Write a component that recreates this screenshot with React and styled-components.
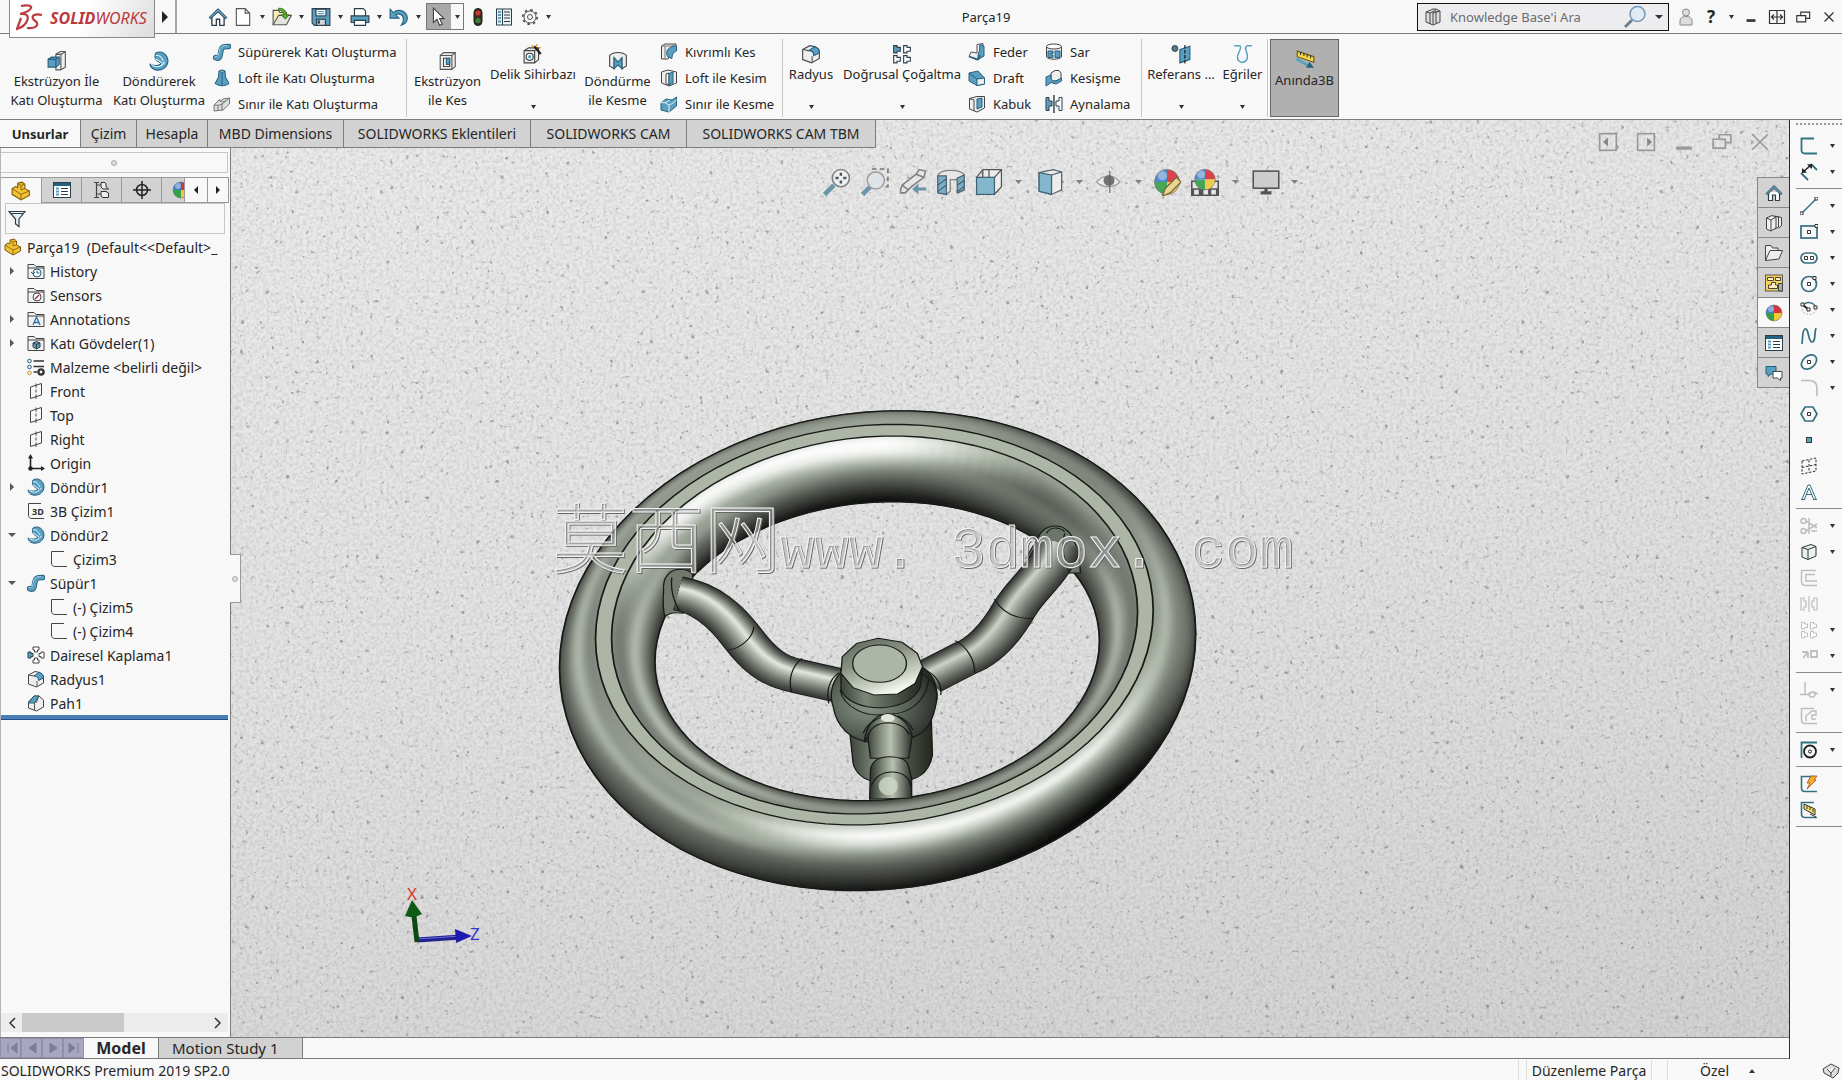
import styled, { createGlobalStyle, css } from 'styled-components';

const colors = {
    panel: '#f8f8f8',
    tab: '#d2d2d2',
    line: '#7c7c7c',
    softLine: '#c6c6c6',
    text: '#262626',
    ink: '#2d3e48',
    blue: '#5a9fc0',
    paleBlue: '#a9d0e2',
    deepBlue: '#24607f',
    sketch: '#34707e',
    disabled: '#bdbdbd',
};

const GlobalStyle = createGlobalStyle`
    * {
        box-sizing: border-box;
    }

    html, body, #root {
        height: 100%;
        margin: 0;
    }

    body {
        overflow: hidden;
        background: ${colors.panel};
        color: ${colors.text};
        font-family: 'Noto Sans', 'Open Sans', sans-serif;
        font-size: 14px;
    }

    button, input {
        font: inherit;
        color: inherit;
    }

    svg {
        display: block;
        flex: none;
    }
`;

/* ---------- icons ---------- */

const I = colors.ink;
const B = colors.blue;
const P = colors.paleBlue;
const D = colors.deepBlue;
const S = colors.sketch;
const G = colors.disabled;

const ball = (
    <>
        <path d="M9 9 L9 1 A8 8 0 0 1 17 9 Z" fill="#d8323a" />
        <path d="M9 9 L17 9 A8 8 0 0 1 9 17 Z" fill="#f0c93a" />
        <path d="M9 9 L9 17 A8 8 0 0 1 1 9 Z" fill="#35a049" />
        <path d="M9 9 L1 9 A8 8 0 0 1 9 1 Z" fill="#3f7fc8" />
        <circle cx="6" cy="5" r="3" fill="#fff" opacity=".4" />
        <circle cx="9" cy="9" r="8" stroke="#666" strokeWidth=".5" />
    </>
);

const folder = <path d="M1 16.500V2.500H7L9 4.500H17V16.500Z M1 6H17" fill="#f1f1f1" stroke="#444" />;
const swirl = (
    <>
        <path d="M6 2 C11 -1 17 3 17 9 C17 15 11 18 6 17 C3 16.500 1 14 1 12 C5 14 10 13 11 11 C7 9 4 7 6 2 Z" fill={B} stroke={D} />
        <path d="M6 4 C9 3 11 5 13 9 M2 12 C7 16 12 14 14 10 M6 7 L12 11" stroke="#e4f3f8" />
    </>
);
const sweep = (
    <>
        <path d="M2.500 14.500 C8 17 7 11 8 7.500 C9 3.500 11 3.500 15.500 3.500" stroke={D} strokeWidth="5.500" strokeLinecap="round" />
        <path d="M2.500 14.500 C8 17 7 11 8 7.500 C9 3.500 11 3.500 15.500 3.500" stroke={B} strokeWidth="3.700" strokeLinecap="round" />
        <path d="M2 13.500 C6 14.500 5.500 10 6.500 7 C7.500 4 9 2.500 14 2.500" stroke={P} />
    </>
);
const filletCube = (
    <>
        <path d="M1.500 5 L8 1.500 L13 2.500 L16.500 6 V13 L9.500 17 L1.500 14 Z" fill="#eee" stroke="#444" />
        <path d="M7 6 L12 2.500 C15 3 16.500 5 16.500 8 L11.500 10.500 C11.500 8 10 6 7 6Z" fill={B} stroke={D} />
        <path d="M1.500 5 L7 6 M10 11 V16.500" stroke="#555" />
    </>
);
const part = (
    <>
        <path d="M1 7 L4 5 L6 6 V2 L10 1 L12.500 3 V7 L16.500 9 V13 L9 17 L1 12 Z" fill="#f2c230" stroke="#7a5a10" />
        <path d="M1 7 L9 12 V17 M9 12 L16.500 9 M6 2.500 L9 4 V8 L12 7 M9 4 L12 3" stroke="#8a6a18" strokeWidth=".9" />
    </>
);
const listBox = (
    <>
        <rect x=".5" y="1.500" width="17" height="15" fill="#fff" stroke={I} />
        <path d="M1 3.500H17" stroke={D} strokeWidth="3" />
        <path d="M3 7.500H6M3 10.500H6M3 13.500H6" stroke={B} strokeWidth="2" />
        <path d="M8 7.500H15M8 10.500H15M8 13.500H15" stroke={I} />
    </>
);
const tee = (t, fill, stroke = I) => (
    <path transform={t} d="M.5 .5H3.500V2H6.500V5.500H3.500V7H.5Z" fill={fill} stroke={stroke} />
);
const plane = <path d="M3.500 5 L14.500 1.500 V13 L3.500 16.500 Z M9 1.500 V5.500 M9 7.500V10.500M9 12.500V17" stroke="#444" fill="none" />;
const sketch = <path d="M14 1.500H1.500V13C1.500 15.500 3 16.500 5 16.500H17" stroke="#444" fill="none" />;
const house = (
    <>
        <path d="M3.500 8V16.500H7.500V11H10.500V16.500H14.500V8" fill="#fff" stroke={I} strokeWidth="1.200" />
        <path d="M1 9.500 L9 1.500 L17 9.500 L15.500 10.500 L9 4.500 L2.500 10.500 Z" fill={B} stroke={I} strokeWidth=".9" />
    </>
);
const box = (fill) => (
    <>
        <path d="M2 4.500 L11 1.500 L16 3.500 V13 L8 16.500 L2 14 Z" fill={fill} stroke="#333" />
        <path d="M2 4.500 L8 6.500 L16 3.500 M8 6.500V16.500" stroke="#333" />
    </>
);

const icons = {
    home: house,
    blank: <path d="M3 1.500H11L15 5.500V16.500H3Z M11 1.500V5.500H15" fill="#fff" stroke="#555" />,
    open: (
        <>
            <path d="M1 16V3H6L7 5H13V8" fill="#f3efb4" stroke="#555" />
            <path d="M1 16 L6 7.500 H17.500 L13 16Z" fill="#e4e4dc" stroke="#555" />
            <path d="M6 1 C11 1 13 4 13 7 H15.500L12 11L8 7H10.500C10 4 8 3 6 3Z" fill="#59a52c" stroke="#2c6515" strokeWidth=".6" />
        </>
    ),
    save: (
        <>
            <path d="M1 1.500H17V16.500H3L1 14.500Z" fill={B} stroke={I} />
            <rect x="4.500" y="2" width="9" height="6" fill="#fff" stroke={I} />
            <path d="M6 4H12M6 6H12" stroke={B} />
            <rect x="5" y="11" width="8" height="5.500" fill="#cfd8dd" stroke={I} />
            <path d="M7 12V15" stroke={I} strokeWidth="2" />
        </>
    ),
    print: (
        <>
            <path d="M4 8V1.500H12L14 3.500V8" fill="#fff" stroke={I} />
            <path d="M1 8H17V14H1Z" fill={B} stroke={I} />
            <path d="M4 12H14V16.500H4Z" fill="#fff" stroke={I} />
        </>
    ),
    undo: <path d="M1 2V10H9L6 7C9 5 13 7 13 11C13 13 12.500 14.500 11 16.500C16 15 17.500 11 16 7.500C14 3 8 1.500 4 5Z" fill={B} stroke={D} />,
    cursor: <path d="M4 1V14L7.200 11L9.500 16.500L12 15.500L9.500 10.500H13.500Z" fill="#fff" stroke="#444" />,
    traffic: (
        <>
            <rect x="5" y=".5" width="8" height="17" rx="4" fill="#3f2a22" stroke="#1c1c1c" />
            <circle cx="9" cy="5" r="2.600" fill="#c23a31" />
            <circle cx="9" cy="12.500" r="2.600" fill="#37843a" />
        </>
    ),
    options: (
        <>
            <rect x="1.500" y="1" width="15" height="16" fill="#e9f1f4" stroke={I} />
            <path d="M7.500 1V17" stroke={I} />
            <path d="M3 4H6M3 7H6M3 10H6M3 13.500H6" stroke={B} strokeWidth="2" />
            <path d="M9 4H15M9 7H15M9 10H15M9 13.500H15" stroke={I} />
        </>
    ),
    gear: (
        <>
            <circle cx="9" cy="9" r="6" stroke="#555" />
            <circle cx="9" cy="9" r="7.200" stroke="#555" strokeWidth="1.800" strokeDasharray="2.600 3.050" />
            <circle cx="9" cy="9" r="2.500" stroke="#555" />
        </>
    ),
    extrude: (
        <>
            <path d="M8 3 L12 .5 H16.500V14.500L12 17 H8Z" fill="#eee" stroke="#555" />
            <path d="M12.500 3V17M8 3H12.500L16 1" stroke="#555" />
            <path d="M1 7.500 L4 5.500H11V12L8 14.500H1Z" fill={B} stroke={D} />
            <path d="M1 7.500H8V14.500M8 7.500L11 5.500" stroke={D} />
        </>
    ),
    revolve: swirl,
    sweep,
    loft: <path d="M6 2C8 .8 10 .8 12 2L12.500 8L16 14.500C12 17.500 6 17.500 2 14.500L5.500 8ZM6 2C8 3.500 10 3.500 12 2M9 4V16" fill={B} stroke={D} />,
    boundary: (
        <>
            <path d="M1 10 L6 5 Q9 6 10 4 L16.500 3V9L10 15L1 16Z" fill="#ddd" stroke="#777" />
            <path d="M1 10Q6 11 9 9L16.500 3M9 9V15.500M5 10.500V16M6 5Q8 8 13 6" stroke="#777" />
        </>
    ),
    cut: (
        <>
            <path d="M2 4L5 1.500H15.500V14L12.500 16.500H2Z" fill="#eee" stroke="#555" />
            <path d="M2 4H12.500V16.500M12.500 4L15.500 1.500" stroke="#555" />
            <path d="M5 6.500H10.500V14H5Z" fill="#fff" stroke="#444" />
            <path d="M7.500 6.500H10.500V12H7.500Z" fill={B} stroke={D} />
        </>
    ),
    wizard: (
        <>
            <path d="M1 6L5 3.500H14V14L10.500 17H1Z" fill="#eee" stroke="#444" />
            <path d="M1 6H10.500V17M10.500 6L14 3.500" stroke="#444" />
            <circle cx="6" cy="11.500" r="3.200" fill="#fff" stroke={I} />
            <circle cx="6" cy="11.500" r="1.500" fill={B} />
            <path d="M10 2L16 9" stroke="#222" strokeWidth="2" />
            <path d="M8 1L9 3M13 0L12 2M16 3L14 4" stroke="#e39b28" strokeWidth="1.300" />
        </>
    ),
    revCut: (
        <>
            <path d="M1.500 4C5 .5 13 .5 16.500 4V13.500L12.500 16V7L9 13L5.500 7V16L1.500 13.500Z" fill="#eee" stroke="#444" />
            <path d="M5.500 6L9 10L12.500 6V16L9 12.500L5.500 16Z" fill={B} stroke={D} />
        </>
    ),
    sweptCut: (
        <>
            <path d="M1.500 3L5 1H16V5L8 16H1.500Z" fill="#eee" stroke="#444" />
            <path d="M1.500 3H12L16 1M5 3V16" stroke="#777" />
            <path d="M7 8C8 5 12 3 16.500 3V8C13 9 12 12 12 15.500L8 14C6.500 12 6.500 10 7 8Z" fill={B} stroke={D} />
        </>
    ),
    loftCut: (
        <>
            <path d="M1.500 3L8 1L16.500 3V14L9 17L1.500 14Z" fill="#eee" stroke="#444" />
            <path d="M6 5L9 4V16L6 14.500Z" fill="#fff" stroke="#444" />
            <path d="M9 4.500L13 3V14L9 16Z" fill={B} stroke={D} />
        </>
    ),
    boundaryCut: (
        <>
            <path d="M1 8 L6 4 L12 5L16.500 2V11L9 17L1 15Z" fill={B} stroke={D} />
            <path d="M1 8 Q5 6 7 9T16.500 5M9 10V17M5 8L10 5" stroke="#e2f1f6" />
        </>
    ),
    fillet: filletCube,
    pattern: (
        <>
            {tee('translate(1 1)', B)}
            {tee('translate(10 1)', '#fff')}
            {tee('translate(1 10)', '#fff')}
            {tee('translate(10 10)', '#fff')}
        </>
    ),
    rib: (
        <>
            <path d="M9 1.500L15 .5V13L9 17L1 13.500L3 9L9 10Z" fill="#eee" stroke="#555" />
            <path d="M12 1.500L16 3V13L10 16.500V12Q12 8 12 1.500Z" fill={B} stroke={D} />
            <path d="M1 13.500L10 16.500L12 12" stroke={D} strokeWidth="1.500" />
        </>
    ),
    draft: (
        <>
            <path d="M1 4L10 2L16.500 9V15L9 16.500L1 12Z" fill={B} stroke={D} />
            <path d="M9 10L16.500 9V15L9 16.500Z" fill="#eee" stroke={D} />
            <path d="M1 4L9 10" stroke={D} />
        </>
    ),
    shell: (
        <>
            <path d="M1.500 3.500L9 1.500H16.500V13L9 17L1.500 14Z" fill="#eee" stroke="#444" />
            <path d="M9 4L14 3V12L9 14Z" fill={B} stroke={D} />
            <path d="M1.500 3.500L6 5V16" stroke="#444" />
        </>
    ),
    wrap: (
        <>
            <path d="M1.500 3.500V14C4 17 14 17 16.500 14V3.500" fill="#eee" stroke="#444" />
            <ellipse cx="9" cy="3.500" rx="7.500" ry="2.500" fill="#fff" stroke="#444" />
            <path d="M3 8H8V10.500H6V12H8V14.500H3ZM10 8H15V14.500H10Z" fill={B} stroke={D} />
        </>
    ),
    intersect: (
        <>
            <path d="M6 4L10 1.500H14L16 4V10L11 12H6Z" fill="#eee" stroke="#444" />
            <path d="M1 8L6 6V10Q8 13 11 12L16.500 9V12L11 15L6 13.500L1 17Z" fill={B} stroke={D} />
        </>
    ),
    mirror: (
        <>
            <path d="M1 2.500H4V6H7V11H4V15.500H1Z" fill={B} stroke={I} />
            <path d="M17 2.500H14V6H11V11H14V15.500H17Z" fill="#fff" stroke={I} />
            <path d="M9 0V18" stroke={I} strokeWidth="1.400" />
        </>
    ),
    reference: (
        <>
            <circle cx="3.500" cy="4" r="2.700" fill="#557a83" stroke={I} strokeWidth=".8" />
            <path d="M8 5L17 2V14L8 17Z" fill={B} stroke={D} />
            <path d="M12.500 1V18" stroke="#111" strokeDasharray="3 1.500" />
        </>
    ),
    curves: <path d="M1 1.500H6C9 3 4 8 4 12C4 18 13 18 13 11C13 7 9 3 13 1.500H17" stroke={B} strokeWidth="1.300" />,
    instant: (
        <>
            <path d="M2 1L17 6V11L2 6Z" fill="#f6d748" stroke="#6a5a12" />
            <path d="M5 2V4.500M8 3V5.500M11 4V6.500M14 5V7.500" stroke="#333" />
            <path d="M1 8L12 14" stroke={B} strokeWidth="2.500" />
            <path d="M10 16H17L13 10.500Z" fill={D} />
        </>
    ),
    help: <path d="M2 4L9 1H12L16 3V14L9 17L2 14ZM2 4L6 5V16M6 5L12 2M9 4V16.500M9 5L16 3M12 3V15" fill="#ddd" stroke="#444" />,
    user: (
        <>
            <circle cx="9" cy="4.500" r="3.500" fill="#ddd" stroke="#888" />
            <path d="M3 17V13C3 10 5 8.500 9 8.500S15 10 15 13V17Z" fill="#ddd" stroke="#888" />
        </>
    ),
    min: <path d="M4 13H14" stroke="#333" strokeWidth="3" />,
    expand: <path d="M1.500 2.500H16.500V15.500H1.500ZM9 3V15M3.500 9H14.500M6 6.500L3.500 9L6 11.500M12 6.500L14.500 9L12 11.500" stroke="#333" strokeWidth="1.200" />,
    restore: <path d="M6.500 7V3.500H16.500V10.500H12M2 7.500H12V14.500H2Z" stroke="#333" strokeWidth="1.300" />,
    close: <path d="M4 4L14 14M14 4L4 14" stroke="#333" strokeWidth="1.400" />,
    dockLeft: (
        <>
            <rect x="1.500" y="1.500" width="15" height="15" stroke="#999" strokeWidth="1.500" />
            <path d="M9 5V13L4.500 9Z" fill="#888" />
        </>
    ),
    dockRight: (
        <>
            <rect x="1.500" y="1.500" width="15" height="15" stroke="#999" strokeWidth="1.500" />
            <path d="M10 5V13L14.500 9Z" fill="#888" />
        </>
    ),
    viewMin: <path d="M2 14.500H16" stroke="#999" strokeWidth="3" />,
    viewRestore: <path d="M6.500 6V2.500H17V9.500H12M1 6.500H12V14.500H1Z" stroke="#999" strokeWidth="1.500" />,
    viewClose: <path d="M2 2L16 16M16 2L2 16" stroke="#999" strokeWidth="1.500" />,
    part,
    list: listBox,
    config: (
        <>
            <path d="M3.500 1V17M3.500 4H8M3.500 13H8" stroke="#444" strokeWidth="1.200" />
            <path d="M1 1.500H6M1 16.500H6" stroke="#444" />
            <path d="M8 1.500H12L13 3V6L15.500 8H10L8 6ZM8 10.500H13L15.500 12V16.500H10L8 15Z" fill="#eee" stroke="#333" />
        </>
    ),
    target: (
        <>
            <circle cx="9" cy="9" r="5.500" stroke="#222" strokeWidth="1.500" />
            <path d="M9 0V18M0 9H18" stroke="#222" strokeWidth="1.500" />
        </>
    ),
    ball,
    filter: <path d="M1 1.500H17L11 9V16.500L7.500 14V9Z M3 3.500H15" fill="#e5f0f4" stroke={I} strokeWidth="1.200" />,
    history: <>{folder}<circle cx="10" cy="11" r="4" fill="#fff" stroke={D} /><path d="M10 8.500V11H12.500M4 10L6 12L8 10" stroke={D} /></>,
    sensors: <>{folder}<circle cx="10" cy="11" r="4" fill="#fff" stroke="#444" /><path d="M8 13L12 9" stroke="#a33" strokeWidth="1.400" /></>,
    annotations: <>{folder}<path d="M6 15L9.500 7L13 15M7.500 12.500H11.500" stroke="#2f6fae" strokeWidth="1.300" /></>,
    bodies: <>{folder}<path d="M6 9L9.500 7.500L13 9V13L9.500 15L6 13Z" fill={B} stroke={I} /><path d="M6 9L9.500 10.500L13 9M9.500 10.500V15" stroke={I} /></>,
    material: (
        <>
            <circle cx="2.500" cy="3" r="1.800" stroke={D} />
            <circle cx="2.500" cy="9" r="1.800" stroke={D} />
            <circle cx="2.500" cy="15" r="1.800" stroke="#c98a2a" />
            <path d="M6.500 3H17M6.500 8.500H17M6.500 14H10" stroke="#333" strokeWidth="1.700" />
            <circle cx="14" cy="14" r="2.600" stroke="#333" strokeWidth="2.400" />
        </>
    ),
    plane,
    origin: (
        <>
            <path d="M3.500 3V14.500H15" stroke="#222" strokeWidth="1.600" />
            <path d="M3.500 0L1 4.500H6ZM18 14.500L14 12V17Z" fill="#222" />
            <circle cx="3.500" cy="14.500" r="2.200" fill="#222" />
        </>
    ),
    sketch,
    circular: (
        <>
            <path d="M6 1H12V4H10.500V6H7.500V4H6Z M6 17H12V14H10.500V12H7.500V14H6ZM17 6V12H14V10.500H12V7.500H14V6Z" fill="#fff" stroke="#444" />
            <path d="M1 6V12H4V10.500H6V7.500H4V6Z" fill={B} stroke={I} />
        </>
    ),
    chamfer: (
        <>
            <path d="M1.500 8L7 2H12L16.500 6V13L9.500 17L1.500 14Z" fill="#eee" stroke="#444" />
            <path d="M1.500 9L7 2H12L7.500 9Z" fill={B} stroke={D} />
            <path d="M7.500 9V16M12 2L9 9" stroke="#555" />
        </>
    ),
    books: <path d="M1.500 4L7 1.500L11 3V14L6 17L1.500 15ZM1.500 4L6 6V17M6 6L11 3M9 2L13.500 3V13L10 15M12 2.500L16.500 3.500V12L13.500 14" fill="#eee" stroke="#444" />,
    folderOpen: <path d="M.5 16.500V1.500H6L7.500 4H13V6.500M.5 16.500L5 6.500H17.500L14 15Z" fill="#eee" stroke="#444" />,
    palette: (
        <>
            <rect x=".5" y="1" width="17" height="16" fill="#f6d25a" stroke="#555" />
            <path d="M2.500 3.500H8.500V6.500H2.500ZM10.500 3.500H15.500V6.500H10.500ZM6.500 8.500H10.500V11H12.500V14.500H3.500V11H6.500Z" fill="#fff0b8" stroke="#444" />
            <path d="M13.500 9.500H17.500V17H13.500Z" fill="#aaa" stroke="#444" />
        </>
    ),
    chat: (
        <>
            <path d="M1 2.500H11V10H6L3 12.500V10H1Z" fill={B} stroke={D} />
            <path d="M8 7.500H17V14H15.500V16.500L12.500 14H8Z" fill="#fff" stroke="#444" />
        </>
    ),
    zoomFit: (
        <>
            <path d="M1 17L7 11" stroke="#5f8ea4" strokeWidth="3" />
            <circle cx="11.500" cy="6.500" r="5.500" fill="#eef2f4" stroke="#777" />
            <path d="M11.500 3V5M11.500 8V10M8 6.500H10M13 6.500H15" stroke="#444" strokeWidth="1.600" />
        </>
    ),
    zoomArea: (
        <>
            <path d="M7 .7H17.300V12H14" stroke="#666" strokeDasharray="3 2" />
            <path d="M1 17L6 12" stroke="#5f8ea4" strokeWidth="3" />
            <circle cx="9.500" cy="8" r="5.500" fill="#dfe4ea" stroke="#999" />
        </>
    ),
    prevView: (
        <>
            <path d="M1 14L2 11L11 4L13 1L17 2L16 6L8 12L4 16L1 16Z" fill="#e6e6e6" stroke="#777" />
            <path d="M11 4L16 6M2 11L6 14" stroke="#777" />
            <path d="M8.500 13.500L12.500 10V12.500H17.500V14.500H12.500V17Z" fill="#5f8ea4" />
        </>
    ),
    section: (
        <>
            <path d="M.5 4.500C3 .5 15 .5 17.500 4.500V14L13.500 16V7.500H8.500V15L6 17L.5 15Z" fill="#e8e8e8" stroke="#777" strokeWidth=".8" />
            <path d="M.5 5H6V17L.5 16ZM13 6.500L17.500 4.500V14L13 16Z" fill="#6fa9c3" stroke="#456" strokeWidth=".8" />
            <path d="M.5 11L6 7M.5 15L6 11M13 11L17.500 8M13 15L17.500 12" stroke="#345" strokeWidth=".7" />
        </>
    ),
    orient: (
        <>
            <path d="M5 1H17V12L12.500 17M1 6L5 1M12.500 6L17 1M5 1V6M9 1V6" stroke="#444" fill="#eee" strokeWidth=".8" />
            <rect x="1" y="6" width="11.500" height="11" fill="#7ab3cc" stroke="#356" strokeWidth=".8" />
        </>
    ),
    display: (
        <>
            <path d="M2 3L11 1L16.500 2.500V14L10 17L2 15Z" fill="#eee" stroke="#456" strokeWidth=".8" />
            <path d="M2 3L10 4.500V17L2 15Z" fill="#7ab3cc" stroke="#356" strokeWidth=".8" />
            <path d="M10 4.500L16.500 2.500" stroke="#456" strokeWidth=".8" />
        </>
    ),
    eye: (
        <>
            <path d="M1 9C5 4 12 4 16 9C12 13 5 13 1 9Z" fill="#eee" stroke="#999" strokeWidth=".8" />
            <circle cx="9" cy="8" r="3.500" fill="#666" />
            <path d="M9.500 2V16" stroke="#555" strokeWidth=".7" />
        </>
    ),
    appearance: (
        <>
            {ball}
            <path d="M6 18L8 13L15 6L18 9L11 16Z" fill="#ecd58a" stroke="#6b5a2a" strokeWidth=".8" />
        </>
    ),
    scene: (
        <>
            <path d="M0 8H18V18H0Z" fill="#444" />
            <path d="M1 9H17V13H1ZM2 14H5V17H2ZM8 14H11V17H8ZM13 14H16V17H13Z" fill="#e8e8e8" />
            <g transform="translate(1.500 0) scale(.83)">{ball}</g>
        </>
    ),
    monitor: (
        <>
            <rect x=".8" y="2" width="16.400" height="11" fill="#ccc" stroke="#444" />
            <path d="M9 13V16M5.500 16H12.500" stroke="#444" strokeWidth="2" />
        </>
    ),
    skSketch: <path d="M14 1.500H1.500V13C1.500 15.500 3 16.500 5 16.500H17" stroke={S} strokeWidth="1.800" />,
    skDim: (
        <>
            <path d="M1 10L8 17M11 1L17 7" stroke={S} strokeWidth="1.800" />
            <path d="M3 9L11 2" stroke="#222" strokeWidth="1.600" />
            <path d="M2 10V5L7 9.500ZM12 1V6L7 1.500Z" fill="#222" />
        </>
    ),
    skLine: (
        <>
            <path d="M1 17L17 1" stroke={S} strokeWidth="1.500" />
            <path d="M0 15H3V18H0ZM15 0H18V3H15Z" fill="#fff" stroke="#333" />
        </>
    ),
    skRect: (
        <>
            <rect x="1" y="3" width="16" height="12" stroke={S} strokeWidth="1.700" />
            <path d="M7.500 7.500H10.500V10.500H7.500ZM15 1.500H18V4.500H15Z" fill="#fff" stroke="#333" />
        </>
    ),
    skSlot: (
        <>
            <rect x="1" y="4" width="16" height="10" rx="5" stroke={S} strokeWidth="1.700" />
            <path d="M4.500 7.500H7.500V10.500H4.500ZM10.500 7.500H13.500V10.500H10.500Z" fill="#fff" stroke="#333" />
        </>
    ),
    skCircle: (
        <>
            <circle cx="9" cy="9" r="7.500" stroke={S} strokeWidth="1.700" />
            <path d="M7.500 7.500H10.500V10.500H7.500ZM13 1.500H16V4.500H13Z" fill="#fff" stroke="#333" />
        </>
    ),
    skArc: (
        <>
            <path d="M3 4C7 0 13 1 16 6" stroke={S} strokeWidth="1.500" />
            <path d="M3 4L9 9" stroke="#222" strokeWidth="1.800" />
            <path d="M2 8C2 15 15 15 16 9" stroke="#bbb" strokeDasharray="2 1.500" />
            <path d="M1 2H4V5H1ZM7 7H10V10H7ZM14 5H17V8H14Z" fill="#fff" stroke="#333" />
        </>
    ),
    skSpline: <path d="M2 17C3 10 2 3 5 2C9 1 8 15 12 15C16 15 14 7 16 1" stroke={S} strokeWidth="1.700" />,
    skEllipse: (
        <>
            <ellipse cx="9" cy="9" rx="8.500" ry="6" transform="rotate(-40 9 9)" stroke={S} strokeWidth="1.700" />
            <path d="M7.500 7.500H10.500V10.500H7.500Z" fill="#fff" stroke="#333" />
        </>
    ),
    skFillet: <path d="M1 1.500H9C14 1.500 17 4 17 9V17" stroke={G} strokeWidth="1.700" />,
    skPoly: (
        <>
            <path d="M1 9L5 2H13L17 9L13 16H5Z" stroke={S} strokeWidth="1.700" />
            <path d="M7.500 7.500H10.500V10.500H7.500Z" fill="#fff" stroke="#333" />
        </>
    ),
    skPoint: <rect x="6.500" y="6.500" width="5" height="5" fill="#5fa0a8" stroke={I} />,
    skPlane: <path d="M2 4L16 1V14L2 17ZM9 3V15.500M2 10.500L16 7.500" stroke="#333" strokeDasharray="2.500 1.500" />,
    skText: <path d="M2 16L8 2H10L16 16M1 16.500H5M13 16.500H17M4.500 16L9 5L13.500 16M6 11.500H12" stroke={S} />,
    skTrim: (
        <>
            <path d="M6 4L17 11M6 14L17 7M9 1V17" stroke={G} strokeWidth="1.500" />
            <circle cx="3.500" cy="4" r="2.500" stroke={G} strokeWidth="1.500" />
            <circle cx="3.500" cy="14" r="2.500" stroke={G} strokeWidth="1.500" />
            <path d="M11 14H17" stroke={G} strokeWidth="1.500" />
        </>
    ),
    skConvert: box('#e8f2f4'),
    skOffset: <path d="M16 1.500H1.500V12C1.500 15 3 16.500 5 16.500H17M15 5.500H6V12H17" stroke={G} strokeWidth="1.400" />,
    skMirror: <path d="M1 3H4V6H6V12H4V15H1ZM17 3H14V6H12V12H14V15H17ZM9 1V17" stroke={G} strokeWidth="1.200" />,
    skPattern: <>{tee('translate(1 1)', '#fff', G)}{tee('translate(10 1)', '#fff', G)}{tee('translate(1 10)', '#fff', G)}{tee('translate(10 10)', '#fff', G)}</>,
    skMove: <path d="M2 5H8M8 5V11M8 5L3 11M11 4H17V10H11Z" stroke={G} strokeWidth="1.800" />,
    skRelation: <path d="M5 1V13M0 13.500H10M12 11A3 2.500 0 1 0 12.100 11M9 13.500C11 10 15 10 18 13.500" stroke={G} strokeWidth="1.500" />,
    skRepair: <path d="M14 1.500H1.500V13C1.500 15.500 3 16.500 5 16.500H17M6 14V9L12 4H16V8H12V12H16" stroke={G} strokeWidth="1.500" />,
    skSnap: (
        <>
            <path d="M1.500 17V1.500H17" stroke={S} strokeWidth="1.800" />
            <circle cx="10" cy="10.500" r="6" stroke="#222" strokeWidth="1.800" />
            <circle cx="10" cy="10.500" r="1.500" stroke="#222" />
        </>
    ),
    skRapid: (
        <>
            <path d="M14 1.500H1.500V13C1.500 15.500 3 16.500 5 16.500H17" stroke={S} strokeWidth="1.600" />
            <path d="M11 1H17L14 5H16L7 14L10 8H7Z" fill="#f4b22c" stroke="#a84a14" strokeWidth=".8" />
        </>
    ),
    skInstant: (
        <>
            <path d="M14 1.500H1.500V13C1.500 15.500 3 16.500 5 16.500H17" stroke={S} strokeWidth="1.600" />
            <path d="M4 3L15 8V14L4 8Z" fill="#f2e06a" stroke="#333" />
            <path d="M7 5V8M10 6V9M13 8V11M10 13L16 16" stroke="#333" />
        </>
    ),
    tag: <path d="M1 7L9 2L17 6L16 11L11 16L2 11ZM5 7L9 11L13 6M9 11V14" fill="#ddd" stroke="#444" />,
};

const Icon = ({ name, size = 18 }) => (
    <svg width={size} height={size} viewBox="0 0 18 18" fill="none" aria-hidden="true">
        {icons[name]}
    </svg>
);

const Caret = ({ up, color = '#333', size = 7 }) => (
    <svg width={size} height="4" viewBox="0 0 8 4" preserveAspectRatio="none" aria-hidden="true">
        <path d={up ? 'M0 4H8L4 0Z' : 'M0 0H8L4 4Z'} fill={color} />
    </svg>
);

const SideArrow = ({ left, color = '#222', size = 10 }) => (
    <svg width={size / 2} height={size} viewBox="0 0 5 10" aria-hidden="true">
        <path d={left ? 'M5 0V10L0 5Z' : 'M0 0V10L5 5Z'} fill={color} />
    </svg>
);

/* ---------- layout ---------- */

const flatButton = css`
    display: flex;
    align-items: center;
    justify-content: center;
    padding: 0;
    border: 0;
    background: none;
`;

const Window = styled.div`
    display: flex;
    flex-direction: column;
    height: 100vh;
`;

const TitleBar = styled.header`
    display: grid;
    grid-template-columns: 1fr auto 1fr;
    align-items: center;
    height: 34px;
    border-bottom: 1px solid ${colors.line};
`;

const TitleSide = styled.div`
    display: flex;
    align-items: center;
    justify-content: ${({ $end }) => ($end ? 'flex-end' : 'flex-start')};
    height: 33px;
`;

const DocumentTitle = styled.h1`
    margin: 0;
    padding-left: 130px;
    font-size: 13px;
    font-weight: 400;
`;

const LogoBox = styled.div`
    display: flex;
    align-items: center;
    gap: 7px;
    position: relative;
    z-index: 1;
    width: 146px;
    height: 38px;
    margin: 4px 0 0 9px;
    padding: 0 0 0 6px;
    border: 1px solid #8a8a8a;
    border-top: 0;
    background: linear-gradient(120deg, #fff 50%, #dcdcdc);
    color: #bb3a40;
    font-size: 16px;
    font-style: italic;
`;

const LogoMark = styled.svg`
    width: 27px;
    height: 28px;
`;

const TitleDivider = styled.span`
    width: 2px;
    height: 33px;
    margin-right: 29px;
    background: #a8a8a8;
`;

const ToolButton = styled.button`
    ${flatButton}
    width: ${({ $w }) => $w || 28}px;
    height: ${({ $h }) => $h || 28}px;
`;

const CursorGroup = styled.div`
    display: flex;
    margin: 0 2px;
    border: 1px solid #777;

    ${ToolButton}:first-child {
        background: #a9a9a9;
    }
`;

const SearchBox = styled.label`
    display: flex;
    align-items: center;
    gap: 8px;
    width: 252px;
    height: 28px;
    margin-right: 5px;
    padding: 0 5px 0 6px;
    border: 1px solid #111;
    background: #ededf0;
`;

const SearchInput = styled.input`
    flex: 1;
    min-width: 0;
    padding: 0;
    border: 0;
    outline: 0;
    background: none;
    font-size: 13px;

    &::placeholder {
        color: #6c6c6c;
        opacity: 1;
    }
`;

const HelpMark = styled.span`
    font-size: 17px;
    font-weight: 700;
`;

const Ribbon = styled.div`
    display: flex;
    align-items: stretch;
    height: 86px;
    padding: 5px 0 2px 5px;
    border-bottom: 1px solid ${colors.line};
    font-size: 13px;
`;

const LargeButton = styled.button`
    ${flatButton}
    flex-direction: column;
    justify-content: flex-start;
    gap: 1px;
    width: ${({ $w }) => $w}px;
    padding-top: ${({ $menu }) => ($menu ? 5 : 12)}px;
    line-height: 19px;
    white-space: nowrap;
    overflow: hidden;

    ${({ $pressed }) => $pressed && css`
        padding-top: 10px;
        border: 1px solid #666;
        background: #b0b0b0;
    `}
`;

const LargeLabel = styled.span`
    text-align: center;
`;

const MenuCaret = styled.span`
    margin-top: auto;
    padding-bottom: 8px;
`;

const SmallColumn = styled.div`
    display: grid;
    grid-template-rows: repeat(3, 26px);
    width: ${({ $w }) => $w}px;
    padding-left: 3px;
`;

const SmallButton = styled.button`
    ${flatButton}
    justify-content: flex-start;
    gap: 7px;
    white-space: nowrap;
`;

const RibbonDivider = styled.span`
    width: 1px;
    margin: 0 ${({ $gap }) => $gap || 0}px;
    background: ${colors.softLine};
`;

const Body = styled.div`
    display: flex;
    flex: 1;
    min-height: 0;
`;

const Workspace = styled.main`
    position: relative;
    display: flex;
    flex: 1;
    flex-direction: column;
    min-width: 0;
    background: linear-gradient(170deg, #ececec 0%, #e3e3e3 50%, #d2d2d2 100%);
`;

const Grain = styled.svg`
    position: absolute;
    inset: 0;
    width: 100%;
    height: 100%;
`;

const CommandTabs = styled.nav`
    position: relative;
    display: flex;
    height: 28px;
`;

const CommandTab = styled.button`
    ${flatButton}
    width: ${({ $w }) => $w}px;
    border-right: 1px solid ${colors.line};
    border-bottom: 1px solid ${colors.line};
    background: ${({ $active }) => ($active ? colors.panel : colors.tab)};
    font-weight: ${({ $active }) => ($active ? 700 : 400)};
    font-size: ${({ $active }) => ($active ? 13 : 14)}px;
`;

const Middle = styled.div`
    position: relative;
    display: flex;
    flex: 1;
    min-height: 0;
`;

const Panel = styled.aside`
    display: flex;
    flex-direction: column;
    width: 231px;
    border-left: 1px solid #b5b5b5;
    border-right: 1px solid ${colors.line};
    background: ${colors.panel};
`;

const PanelGrip = styled.div`
    display: flex;
    align-items: center;
    justify-content: center;
    height: 21px;
    margin: 4px 2px 4px 0;
    border: solid ${colors.softLine};
    border-width: 1px 1px 1px 0;
`;

const Dot = styled.span`
    width: 6px;
    height: 6px;
    border: 1px solid #aaa;
    border-radius: 50%;
    background: #ddd;
`;

const PanelTabs = styled.div`
    display: flex;
    height: 26px;
    margin-right: 2px;
`;

const PanelTab = styled.button`
    ${flatButton}
    flex: 0 0 ${({ $w }) => $w || 40}px;
    overflow: hidden;
    border: solid #999;
    border-width: 1px 1px ${({ $active }) => ($active ? 0 : 1)}px 0;
    background: ${({ $active, $plain }) => ($active || $plain ? colors.panel : colors.tab)};
    ${({ $cut }) => $cut && 'justify-content: flex-start; padding-left: 10px;'}
`;

const FilterBox = styled.label`
    display: flex;
    align-items: center;
    height: 31px;
    margin: 0 5px 1px 4px;
    padding-left: 2px;
    border: 1px solid ${colors.softLine};
`;

const Tree = styled.ul`
    flex: 1;
    margin: 0 2px 0 0;
    padding: 0;
    overflow: hidden;
    list-style: none;
`;

const TreeRow = styled.li`
    display: flex;
    align-items: center;
    gap: 5px;
    height: 24px;
    padding-left: ${({ $level }) => [3, 6, 49][$level]}px;
    white-space: pre;
`;

const Twist = styled.span`
    display: flex;
    justify-content: center;
    width: 9px;
    margin-right: 6px;
`;

const RollbackBar = styled.li`
    height: 5px;
    border-bottom: 1px solid #1f4f86;
    background: #4a7fb5;
`;

const ScrollRow = styled.div`
    display: flex;
    height: 19px;
    margin: 0 2px 5px 0;
    background: #ececec;
`;

const ScrollThumb = styled.span`
    width: 102px;
    margin-right: auto;
    background: #c9c9c9;
`;

const Viewport = styled.section`
    position: relative;
    flex: 1;
    min-width: 0;
`;

const Splitter = styled.button`
    ${flatButton}
    position: absolute;
    top: 406px;
    left: -1px;
    width: 11px;
    height: 49px;
    border: 1px solid #999;
    border-left: 0;
    background: ${colors.panel};
`;

const ViewTools = styled.div`
    position: absolute;
    top: 20px;
    left: 587px;
    display: flex;
    opacity: 0.9;
`;

const ViewControls = styled.div`
    position: absolute;
    top: 8px;
    right: 10px;
    z-index: 1;
    display: flex;
`;

const TaskTabs = styled.div`
    position: absolute;
    top: 29px;
    right: 0;
    display: flex;
    flex-direction: column;
    width: 32px;
    border: solid #888;
    border-width: 1px 0 0 1px;
`;

const TaskTab = styled.button`
    ${flatButton}
    height: 30px;
    border-bottom: 1px solid #888;
    background: ${({ $active }) => ($active ? colors.panel : colors.tab)};
`;

const Model = styled.svg`
    position: absolute;
    top: 242px;
    left: 309px;
    width: 680px;
    height: 520px;
`;

const Watermark = styled.div`
    position: absolute;
    top: 331px;
    left: 321px;
    display: flex;
    align-items: baseline;
    color: rgba(225, 225, 225, 0.3);
    font-family: 'Liberation Mono', 'Noto Sans CJK SC', monospace;
    font-size: 57px;
    white-space: pre;
    -webkit-text-stroke: 1px #f4f4f4;
    filter: drop-shadow(1px 1px 0 #666);
`;

const WatermarkHan = styled.span`
    font-family: 'Noto Sans CJK SC', sans-serif;
    font-size: 76px;
    font-weight: 300;
`;

const Triad = styled.svg`
    position: absolute;
    top: 730px;
    left: 166px;
    width: 90px;
    height: 70px;
`;

const ModelTabs = styled.div`
    position: relative;
    display: flex;
    height: 22px;
    border: solid ${colors.line};
    border-width: 1px 0;
    background: ${colors.panel};
`;

const ModelTab = styled.button`
    ${flatButton}
    width: ${({ $w }) => $w}px;
    border-right: 1px solid ${colors.line};
    background: ${({ $active }) => ($active ? colors.panel : colors.tab)};
    font-size: ${({ $active }) => ($active ? 16 : 15)}px;
    font-weight: ${({ $active }) => ($active ? 700 : 400)};
    line-height: 18px;
    ${({ $left }) => $left && 'justify-content: flex-start; padding-left: 13px;'}
`;

const StepButton = styled.button`
    ${flatButton}
    width: 21px;
    border: 1px solid #8f8fa8;
    background: #a7a7c2;
`;

const SketchBar = styled.aside`
    width: 53px;
    padding-top: 3px;
    border-left: 1px solid #16303f;
    background: ${colors.panel};
`;

const SketchDots = styled.div`
    height: 10px;
    margin-left: 6px;
    border-top: 2px dotted #999;
`;

const SketchRow = styled.div`
    display: flex;
    align-items: center;
    height: 26px;
    padding-left: 6px;
`;

const SketchDivider = styled.hr`
    height: 1px;
    margin: 3px 0 4px 6px;
    border: 0;
    background: #8a8a8a;
`;

const StatusBar = styled.footer`
    display: flex;
    align-items: center;
    height: 21px;
    padding: 2px 2px 0 1px;
`;

const StatusCell = styled.span`
    display: flex;
    align-items: center;
    justify-content: center;
    width: ${({ $w }) => $w}px;
    height: 21px;
    margin-left: ${({ $first }) => ($first ? 'auto' : 0)};
    border-left: 1px solid #dcdcdc;
`;

const UnitsButton = styled.button`
    ${flatButton}
    justify-content: flex-start;
    gap: 20px;
    width: 155px;
    height: 21px;
    padding-left: 32px;
    border-left: 1px solid #dcdcdc;
`;

/* ---------- handwheel drawing ---------- */

// Each ring is given by its extents: left, right, top, bottom
const rings = {
    outer: [45, 1512, 62, 1502],
    bandOut: [128, 1414, 103, 1305],
    bandIn: [165, 1378, 138, 1272],
    hole: [265, 1290, 335, 1232],
};

const STEPS = [0, 0.1, 0.25, 0.4, 0.55, 0.7, 0.85, 1];

// Brightness across the tube, one line per direction: E NE N NW W SW S SE
const outerLight = [
    [40, 95, 120, 130, 150, 190, 165, 150],
    [45, 70, 95, 120, 140, 130, 135, 140],
    [30, 90, 160, 140, 155, 165, 160, 165],
    [45, 85, 130, 175, 155, 145, 155, 155],
    [60, 95, 120, 165, 190, 150, 130, 140],
    [40, 75, 95, 115, 180, 150, 165, 155],
    [18, 40, 70, 100, 145, 220, 255, 200],
    [8, 15, 45, 85, 125, 180, 250, 195],
];
const innerLight = [
    [135, 115, 125, 155, 190, 130, 100, 60],
    [165, 150, 115, 95, 115, 100, 75, 35],
    [230, 255, 245, 185, 125, 85, 45, 10],
    [220, 255, 225, 165, 155, 105, 70, 25],
    [145, 125, 120, 150, 195, 150, 105, 50],
    [130, 120, 135, 170, 200, 150, 115, 60],
    [120, 140, 165, 150, 130, 110, 85, 50],
    [130, 120, 150, 175, 150, 125, 90, 60],
];

const mix = (a, b, t) => a + (b - a) * t;

const ringPoint = (ring, angle) => {
    const [l, r, t, b] = ring;
    const lean = 0.07;
    const x = (l + r) / 2 + ((r - l) / 2) * Math.cos(angle);
    const y = (t + b) / 2 - ((b - t) / 2) * (lean * Math.cos(angle) + Math.sqrt(1 - lean * lean) * Math.sin(angle));
    return `${x.toFixed(1)} ${y.toFixed(1)}`;
};

const blend = (from, to, t) => from.map((v, i) => mix(v, to[i], t));

const ringPath = (ring) => {
    const points = Array.from({ length: 90 }, (_, i) => ringPoint(ring, (i * Math.PI) / 45));
    return `M${points.join('L')}Z`;
};

const shade = (l) => {
    const white = Math.max(0, (l - 180) / 75);
    const r = Math.round(l * mix(0.955, 1, white));
    const b = Math.round(l * mix(0.93, 1, white));
    return `rgb(${r},${Math.round(l)},${b})`;
};

const lightAt = (table, angle, s) => {
    const a = (angle / (Math.PI / 4)) % 8;
    const i = Math.floor(a);
    const k = Math.min(6, STEPS.findIndex((v, n) => s < STEPS[n + 1]));
    const t = (s - STEPS[k]) / (STEPS[k + 1] - STEPS[k]);
    const row = (n) => mix(table[n % 8][k], table[n % 8][k + 1], t);
    const f = a - i;
    const smooth = f * f * (3 - 2 * f);
    return mix(row(i), row(i + 1), smooth);
};

const surface = (from, to, table) => {
    const facets = [];
    const around = 120;
    const across = 16;
    for (let i = 0; i < around; i++) {
        const a0 = (i * 2 * Math.PI) / around;
        const a1 = ((i + 1) * 2 * Math.PI) / around;
        for (let j = 0; j < across; j++) {
            const near = blend(from, to, j / across);
            const far = blend(from, to, (j + 1) / across);
            const d = `M${ringPoint(near, a0)}L${ringPoint(near, a1)}L${ringPoint(far, a1)}L${ringPoint(far, a0)}Z`;
            const c = shade(lightAt(table, (a0 + a1) / 2, (j + 0.5) / across));
            facets.push(<path key={`${i}-${j}`} d={d} fill={c} stroke={c} strokeWidth="2" />);
        }
    }
    return facets;
};

const outerSurface = surface(rings.outer, rings.bandOut, outerLight);
const innerSurface = surface(rings.bandIn, rings.hole, innerLight);

const Tube = ({ d, width, dx = 0, dy = 0, peak = 225 }) => (
    <g fill="none" strokeLinecap="butt">
        <path d={d} stroke="#151815" strokeWidth={width + 5} />
        {Array.from({ length: 12 }, (_, i) => (
            <path
                key={i}
                d={d}
                transform={`translate(${(dx * i) / 11} ${(dy * i) / 11})`}
                stroke={shade(mix(60, peak, (i / 11) ** 1.1))}
                strokeWidth={width * (1 - i / 12)}
            />
        ))}
    </g>
);

const Handwheel = () => (
    <Model viewBox="0 0 1568 1560" preserveAspectRatio="none" aria-label="Handwheel">
        <defs>
            <linearGradient id="barrel">
                <stop offset="0" stopColor="#3c433a" />
                <stop offset=".3" stopColor="#7d8679" />
                <stop offset=".6" stopColor="#555d52" />
                <stop offset="1" stopColor="#23271f" />
            </linearGradient>
            <linearGradient id="chamferRing" x1="0" y1="0" x2=".5" y2="1">
                <stop offset="0" stopColor="#59615a" />
                <stop offset=".45" stopColor="#889182" />
                <stop offset=".8" stopColor="#c6cfc0" />
                <stop offset="1" stopColor="#f3f6ef" />
            </linearGradient>
            <radialGradient id="hubBall" cx=".35" cy=".5" r=".7">
                <stop offset="0" stopColor="#8d9789" />
                <stop offset=".5" stopColor="#5b645a" />
                <stop offset="1" stopColor="#252924" />
            </radialGradient>
            <linearGradient id="upright">
                <stop offset="0" stopColor="#2b2f29" />
                <stop offset=".3" stopColor="#7b8476" />
                <stop offset=".55" stopColor="#b9c2b2" />
                <stop offset=".8" stopColor="#6b7467" />
                <stop offset="1" stopColor="#2b2f29" />
            </linearGradient>
            <filter id="polish">
                <feGaussianBlur stdDeviation="6" />
            </filter>
            <clipPath id="outerClip">
                <path d={ringPath(rings.outer) + ringPath(rings.bandOut)} clipRule="evenodd" />
            </clipPath>
            <clipPath id="innerClip">
                <path d={ringPath(rings.bandIn) + ringPath(rings.hole)} clipRule="evenodd" />
            </clipPath>
        </defs>

        {outerSurface}
        {innerSurface}
        <g clipPath="url(#outerClip)"><g filter="url(#polish)">{outerSurface}</g></g>
        <g clipPath="url(#innerClip)"><g filter="url(#polish)">{innerSurface}</g></g>
        <path d={ringPath(rings.bandOut) + ringPath(rings.bandIn)} fill="#adb5a6" fillRule="evenodd" />
        <g fill="none" stroke="#171a16" strokeWidth="4">
            {Object.entries(rings).map(([name, ring]) => <path key={name} d={ringPath(ring)} />)}
        </g>

        <path d="M285 600C282 560 300 538 325 538C345 540 355 550 352 566L330 670C310 665 298 668 288 680C282 650 284 620 285 600Z" fill="#717a6d" stroke="#171a16" strokeWidth="3" />
        <path d="M1150 440C1160 410 1185 402 1205 412C1235 430 1245 500 1246 548L1210 550L1120 505Z" fill="#6d766a" stroke="#171a16" strokeWidth="3" />

        <Tube d="M318 610C385 625 430 680 466 742C505 810 540 845 590 857L695 888" width={98} dx={4} dy={-14} />
        <Tube d="M1198 462C1175 550 1125 590 1094 657C1060 735 1020 785 980 805L895 862" width={100} dx={-12} dy={-8} peak={205} />
        <g fill="none" stroke="#171a16" strokeWidth="3">
            <path d="M304 562C300 600 310 640 322 664M493 710C492 740 465 775 434 780M604 805C580 830 572 870 580 905M690 848C664 870 660 910 666 940" />
            <path d="M1048 628C1065 665 1095 688 1137 685M957 752C985 770 1004 812 1002 850M884 838C910 850 928 880 924 915" />
            <path d="M1210 430C1200 470 1210 520 1220 545M1168 430C1175 412 1195 408 1210 425" />
        </g>

        <path d="M715 1035L722 1120C728 1150 748 1168 770 1175L858 1168C882 1158 898 1140 905 1095L902 970Z" fill="url(#barrel)" stroke="#171a16" strokeWidth="3" />
        <path d="M692 850C670 880 668 920 676 950C684 1010 715 1050 762 1057L850 1045C895 1035 908 985 915 930C918 880 905 850 880 830Z" fill="url(#hubBall)" stroke="#171a16" strokeWidth="3" />
        <path d="M694 835V900C705 935 745 955 790 953C835 950 870 925 878 885L882 830Z" fill="url(#barrel)" stroke="#171a16" strokeWidth="3" />
        <path d="M692 900C700 950 750 985 800 972C850 975 890 935 896 870M876 850C910 870 918 900 915 930" fill="none" stroke="#171a16" strokeWidth="3" />
        <path d="M780 745L835 757L870 790L882 830L865 880L825 912L770 915L722 893L694 850L697 800L730 760Z" fill="url(#chamferRing)" stroke="#171a16" strokeWidth="3" />
        <ellipse cx="783" cy="821" rx="62" ry="56" fill="#adb5a6" stroke="#171a16" strokeWidth="3" />

        <path d="M748 1057C750 1010 770 975 800 972C835 975 855 1010 858 1040L850 1105H762L756 1040Z" fill="url(#upright)" stroke="#171a16" strokeWidth="3" />
        <path d="M756 1040C762 1010 780 998 805 998C830 1000 845 1015 852 1035M745 1030C752 1005 770 990 790 980M825 978C845 990 855 1005 860 1020" fill="none" stroke="#171a16" strokeWidth="3" />
        <ellipse cx="802" cy="984" rx="16" ry="12" fill="#dfe5d9" />
        <path d="M762 1140C765 1110 785 1100 805 1100C830 1100 848 1110 850 1130L857 1165V1224L760 1228Z" fill="url(#upright)" stroke="#171a16" strokeWidth="3" />
        <path d="M764 1186C775 1155 795 1145 815 1146C835 1148 852 1160 855 1190" fill="none" stroke="#171a16" strokeWidth="3" />
        <ellipse cx="803" cy="1188" rx="22" ry="28" fill="#cfd7c8" opacity=".8" />
    </Model>
);

/* ---------- data ---------- */

const commandTabs = [
    ['Unsurlar', 81],
    ['Çizim', 56],
    ['Hesapla', 71],
    ['MBD Dimensions', 136],
    ['SOLIDWORKS Eklentileri', 187],
    ['SOLIDWORKS CAM', 156],
    ['SOLIDWORKS CAM TBM', 189],
];

const treeItems = [
    { level: 0, icon: 'part', label: 'Parça19  (Default<<Default>_' },
    { level: 1, icon: 'history', label: 'History', twist: 'closed' },
    { level: 1, icon: 'sensors', label: 'Sensors' },
    { level: 1, icon: 'annotations', label: 'Annotations', twist: 'closed' },
    { level: 1, icon: 'bodies', label: 'Katı Gövdeler(1)', twist: 'closed' },
    { level: 1, icon: 'material', label: 'Malzeme <belirli değil>' },
    { level: 1, icon: 'plane', label: 'Front' },
    { level: 1, icon: 'plane', label: 'Top' },
    { level: 1, icon: 'plane', label: 'Right' },
    { level: 1, icon: 'origin', label: 'Origin' },
    { level: 1, icon: 'revolve', label: 'Döndür1', twist: 'closed' },
    { level: 1, icon: 'sketch3d', label: '3B Çizim1' },
    { level: 1, icon: 'revolve', label: 'Döndür2', twist: 'open' },
    { level: 2, icon: 'sketch', label: 'Çizim3' },
    { level: 1, icon: 'sweep', label: 'Süpür1', twist: 'open' },
    { level: 2, icon: 'sketch', label: '(-) Çizim5' },
    { level: 2, icon: 'sketch', label: '(-) Çizim4' },
    { level: 1, icon: 'circular', label: 'Dairesel Kaplama1' },
    { level: 1, icon: 'fillet', label: 'Radyus1' },
    { level: 1, icon: 'chamfer', label: 'Pah1' },
];

const sketchGroups = [
    [['skSketch', 1], ['skDim', 1]],
    [
        ['skLine', 1], ['skRect', 1], ['skSlot', 1], ['skCircle', 1], ['skArc', 1], ['skSpline', 1],
        ['skEllipse', 1], ['skFillet', 1], ['skPoly'], ['skPoint'], ['skPlane'], ['skText'],
    ],
    [['skTrim', 1], ['skConvert', 1], ['skOffset'], ['skMirror'], ['skPattern', 1], ['skMove', 1]],
    [['skRelation', 1], ['skRepair']],
    [['skSnap', 1]],
    [['skRapid'], ['skInstant']],
];

const fileTools = ['open', 'save', 'print', 'undo'];

const viewTools = [
    ['zoomFit', 38], ['zoomArea', 38], ['prevView', 38], ['section', 38], ['orient', 38], ['caret', 20],
    ['display', 44], ['caret', 14], ['eye', 46], ['caret', 12], ['appearance', 46], ['scene', 30],
    ['caret', 30], ['monitor', 32], ['caret', 24],
];

/* ---------- parts ---------- */

const Large = ({ icon, lines, w, menu, pressed }) => (
    <LargeButton $w={w} $menu={menu} $pressed={pressed}>
        <Icon name={icon} size={20} />
        <LargeLabel>
            {lines.map((line) => <div key={line}>{line}</div>)}
        </LargeLabel>
        {menu && <MenuCaret><Caret size={5} /></MenuCaret>}
    </LargeButton>
);

const Smalls = ({ items, w }) => (
    <SmallColumn $w={w}>
        {items.map(([icon, label]) => (
            <SmallButton key={label}>
                <Icon name={icon} />
                {label}
            </SmallButton>
        ))}
    </SmallColumn>
);

const Sketch3dIcon = () => (
    <svg width="18" height="18" viewBox="0 0 18 18" fill="none" aria-hidden="true">
        {icons.sketch}
        <text x="5" y="13" fontSize="9" fontWeight="700" fill="#333">3D</text>
    </svg>
);

const FeatureTree = () => (
    <Tree>
        {treeItems.map(({ level, icon, label, twist }) => (
            <TreeRow key={label} $level={level}>
                {level === 1 && (
                    <Twist>
                        {twist === 'closed' && <SideArrow color="#555" size={8} />}
                        {twist === 'open' && <Caret color="#555" size={8} />}
                    </Twist>
                )}
                {icon === 'sketch3d' ? <Sketch3dIcon /> : <Icon name={icon} />}
                {label}
            </TreeRow>
        ))}
        <RollbackBar />
    </Tree>
);

const App = () => (
    <Window>
        <GlobalStyle />
        <TitleBar>
            <TitleSide>
                <LogoBox>
                    <LogoMark viewBox="0 0 27 28" fill="none" stroke="#bb3a40" strokeWidth="2.200">
                        <path d="M5 2C10 1 16 1 15 4C14 7 8 9 4 10C11 9 13 12 11 17C9 22 4 24 1 25L5 14" />
                        <path d="M26 11C19 9 14 12 18 16C25 20 20 25 11 24" />
                    </LogoMark>
                    <span><b>SOLID</b>WORKS</span>
                </LogoBox>
                <ToolButton $w={20} aria-label="Menü"><SideArrow size={12} /></ToolButton>
                <TitleDivider />
                <ToolButton $w={24} aria-label="Hoş geldiniz"><Icon name="home" size={20} /></ToolButton>
                <ToolButton $w={26} aria-label="Yeni"><Icon name="blank" size={20} /></ToolButton>
                <ToolButton $w={12} aria-label="Yeni seçenekleri"><Caret size={5} /></ToolButton>
                {fileTools.map((name) => [
                    <ToolButton key={name} aria-label={name}><Icon name={name} size={20} /></ToolButton>,
                    <ToolButton key={`${name}-menu`} $w={11} aria-label={`${name} menu`}><Caret size={5} /></ToolButton>,
                ])}
                <CursorGroup>
                    <ToolButton $w={24} $h={25} aria-label="Seç"><Icon name="cursor" size={20} /></ToolButton>
                    <ToolButton $w={12} $h={25} aria-label="Seçim araçları"><Caret size={5} /></ToolButton>
                </CursorGroup>
                <ToolButton $w={24} aria-label="Yeniden oluştur"><Icon name="traffic" /></ToolButton>
                <ToolButton aria-label="Dosya özellikleri"><Icon name="options" /></ToolButton>
                <ToolButton $w={24} aria-label="Seçenekler"><Icon name="gear" /></ToolButton>
                <ToolButton $w={12} aria-label="Seçenekler menüsü"><Caret size={5} /></ToolButton>
            </TitleSide>
            <DocumentTitle>Parça19</DocumentTitle>
            <TitleSide $end>
                <SearchBox>
                    <Icon name="help" />
                    <SearchInput type="text" placeholder="Knowledge Base'i Ara" />
                    <svg width="24" height="24" viewBox="0 0 24 24" fill="none" aria-hidden="true">
                        <path d="M2 22L9 15" stroke="#6d7f8c" strokeWidth="3" />
                        <circle cx="14.500" cy="9" r="7.500" fill="#dfeaf4" stroke="#6f97b8" strokeWidth="1.500" />
                    </svg>
                    <Caret size={8} />
                </SearchBox>
                <ToolButton $w={24} aria-label="Oturum"><Icon name="user" /></ToolButton>
                <ToolButton $w={26} aria-label="Yardım"><HelpMark>?</HelpMark></ToolButton>
                <ToolButton $w={14} aria-label="Yardım menüsü"><Caret size={5} /></ToolButton>
                <ToolButton $w={26} aria-label="Simge durumu"><Icon name="min" size={16} /></ToolButton>
                <ToolButton $w={26} aria-label="Yay"><Icon name="expand" /></ToolButton>
                <ToolButton $w={26} aria-label="Geri yükle"><Icon name="restore" size={16} /></ToolButton>
                <ToolButton $w={26} aria-label="Kapat"><Icon name="close" size={16} /></ToolButton>
            </TitleSide>
        </TitleBar>

        <Ribbon>
            <Large icon="extrude" lines={['Ekstrüzyon İle', 'Katı Oluşturma']} w={103} />
            <Large icon="revolve" lines={['Döndürerek', 'Katı Oluşturma']} w={102} />
            <Smalls
                w={196}
                items={[
                    ['sweep', 'Süpürerek Katı Oluşturma'],
                    ['loft', 'Loft ile Katı Oluşturma'],
                    ['boundary', 'Sınır ile Katı Oluşturma'],
                ]}
            />
            <RibbonDivider />
            <Large icon="cut" lines={['Ekstrüzyon', 'ile Kes']} w={81} />
            <Large icon="wizard" lines={['Delik Sihirbazı']} w={90} menu />
            <Large icon="revCut" lines={['Döndürme', 'ile Kesme']} w={79} />
            <Smalls
                w={125}
                items={[
                    ['sweptCut', 'Kıvrımlı Kes'],
                    ['loftCut', 'Loft ile Kesim'],
                    ['boundaryCut', 'Sınır ile Kesme'],
                ]}
            />
            <RibbonDivider />
            <Large icon="fillet" lines={['Radyus']} w={56} menu />
            <Large icon="pattern" lines={['Doğrusal Çoğaltma']} w={126} menu />
            <Smalls w={77} items={[['rib', 'Feder'], ['draft', 'Draft'], ['shell', 'Kabuk']]} />
            <Smalls w={99} items={[['wrap', 'Sar'], ['intersect', 'Kesişme'], ['mirror', 'Aynalama']]} />
            <RibbonDivider />
            <Large icon="reference" lines={['Referans ...']} w={78} menu />
            <Large icon="curves" lines={['Eğriler']} w={45} menu />
            <RibbonDivider $gap={2} />
            <Large icon="instant" lines={['Anında3B']} w={69} pressed />
        </Ribbon>

        <Body>
            <Workspace>
                <Grain aria-hidden="true">
                    <filter id="grain" x="0" y="0" width="100%" height="100%" colorInterpolationFilters="sRGB">
                        <feTurbulence type="fractalNoise" baseFrequency=".3" numOctaves="2" seed="4" />
                        <feColorMatrix values="0 0 0 0 .45  0 0 0 0 .45  0 0 0 0 .45  .45 0 0 0 -.17" />
                    </filter>
                    <filter id="specks" x="0" y="0" width="100%" height="100%" colorInterpolationFilters="sRGB">
                        <feTurbulence type="fractalNoise" baseFrequency=".2" numOctaves="2" seed="11" />
                        <feColorMatrix values="0 0 0 0 .4  0 0 0 0 .4  0 0 0 0 .4  0 6 0 0 -4.1" />
                    </filter>
                    <rect width="100%" height="100%" filter="url(#grain)" />
                    <rect width="100%" height="100%" filter="url(#specks)" opacity=".55" />
                </Grain>
                <CommandTabs>
                    {commandTabs.map(([label, w], i) => (
                        <CommandTab key={label} $w={w} $active={i === 0}>{label}</CommandTab>
                    ))}
                </CommandTabs>
                <Middle>
                    <Panel>
                        <PanelGrip><Dot /></PanelGrip>
                        <PanelTabs>
                            <PanelTab $w={41} $active aria-label="Ağaç"><Icon name="part" size={20} /></PanelTab>
                            <PanelTab aria-label="Özellikler"><Icon name="list" /></PanelTab>
                            <PanelTab aria-label="Konfigürasyon"><Icon name="config" /></PanelTab>
                            <PanelTab aria-label="DimXpert"><Icon name="target" /></PanelTab>
                            <PanelTab $w={23} $cut aria-label="Görünüm"><Icon name="ball" /></PanelTab>
                            <PanelTab $w={23} $plain aria-label="Geri"><SideArrow left size={8} /></PanelTab>
                            <PanelTab $w={21} $plain aria-label="İleri"><SideArrow size={8} /></PanelTab>
                        </PanelTabs>
                        <FilterBox aria-label="Filtre"><Icon name="filter" /></FilterBox>
                        <FeatureTree />
                        <ScrollRow>
                            <ToolButton $w={21} $h={19} aria-label="Sola">
                                <svg width="8" height="12" viewBox="0 0 8 12"><path d="M7 1L2 6L7 11" fill="none" stroke="#333" strokeWidth="1.500" /></svg>
                            </ToolButton>
                            <ScrollThumb />
                            <ToolButton $w={21} $h={19} aria-label="Sağa">
                                <svg width="8" height="12" viewBox="0 0 8 12"><path d="M1 1L6 6L1 11" fill="none" stroke="#333" strokeWidth="1.500" /></svg>
                            </ToolButton>
                        </ScrollRow>
                    </Panel>

                    <Viewport>
                        <Handwheel />
                        <Watermark>
                            <WatermarkHan>莫西网</WatermarkHan>
                            www. 3dmox. com
                        </Watermark>
                        <Triad viewBox="0 0 90 70">
                            <path d="M20 62L64 59" stroke="#20208f" strokeWidth="5" />
                            <path d="M20 61L64 58" stroke="#6a6ae0" />
                            <path d="M58 51L75 58L59 65Z" fill="#1c1cb0" />
                            <path d="M20 64L17 38" stroke="#0d4a12" strokeWidth="5" />
                            <path d="M8 38L15 22L25 36Q17 41 8 38Z" fill="#0e5a16" />
                            <text x="10" y="22" fontSize="17" fill="#d8362c">X</text>
                            <text x="73" y="62" fontSize="17" fill="#3434d0">Z</text>
                        </Triad>
                        <ViewTools>
                            {viewTools.map(([name, w], i) => (
                                <ToolButton key={i} $w={w} aria-label={name}>
                                    {name === 'caret' ? <Caret color="#777" /> : <Icon name={name} size={28} />}
                                </ToolButton>
                            ))}
                        </ViewTools>
                        <Splitter aria-label="Paneli daralt"><Dot /></Splitter>
                        <TaskTabs>
                            {['home', 'books', 'folderOpen', 'palette', 'ball', 'list', 'chat'].map((name) => (
                                <TaskTab key={name} $active={name === 'ball'} aria-label={name}>
                                    <Icon name={name} />
                                </TaskTab>
                            ))}
                        </TaskTabs>
                    </Viewport>
                </Middle>
                <ViewControls>
                    {['dockLeft', 'dockRight', 'viewMin', 'viewRestore', 'viewClose'].map((name) => (
                        <ToolButton key={name} $w={38} aria-label={name}><Icon name={name} size={20} /></ToolButton>
                    ))}
                </ViewControls>
                <ModelTabs>
                    {['M14 0V10L8 5ZM5 0V10', 'M12 0V10L5 5Z', 'M5 0V10L12 5Z', 'M3 0V10L9 5ZM12 0V10'].map((d) => (
                        <StepButton key={d} aria-label="Sekme kaydır">
                            <svg width="16" height="10" viewBox="0 0 16 10"><path d={d} fill="#7d7d9c" stroke="#7d7d9c" /></svg>
                        </StepButton>
                    ))}
                    <ModelTab $active $w={75}>Model</ModelTab>
                    <ModelTab $left $w={144}>Motion Study 1</ModelTab>
                </ModelTabs>
            </Workspace>

            <SketchBar>
                <SketchDots />
                {sketchGroups.map((group, n) => (
                    <div key={n}>
                        {group.map(([name, menu]) => (
                            <SketchRow key={name}>
                                <ToolButton $w={26} aria-label={name}><Icon name={name} /></ToolButton>
                                {menu && <ToolButton $w={20} aria-label={`${name} menu`}><Caret size={5} /></ToolButton>}
                            </SketchRow>
                        ))}
                        <SketchDivider />
                    </div>
                ))}
            </SketchBar>
        </Body>

        <StatusBar>
            SOLIDWORKS Premium 2019 SP2.0
            <StatusCell $w={8} $first />
            <StatusCell $w={125}>Düzenleme Parça</StatusCell>
            <StatusCell $w={16} />
            <UnitsButton>Özel <Caret up size={6} /></UnitsButton>
            <Icon name="tag" />
        </StatusBar>
    </Window>
);

export default App;
